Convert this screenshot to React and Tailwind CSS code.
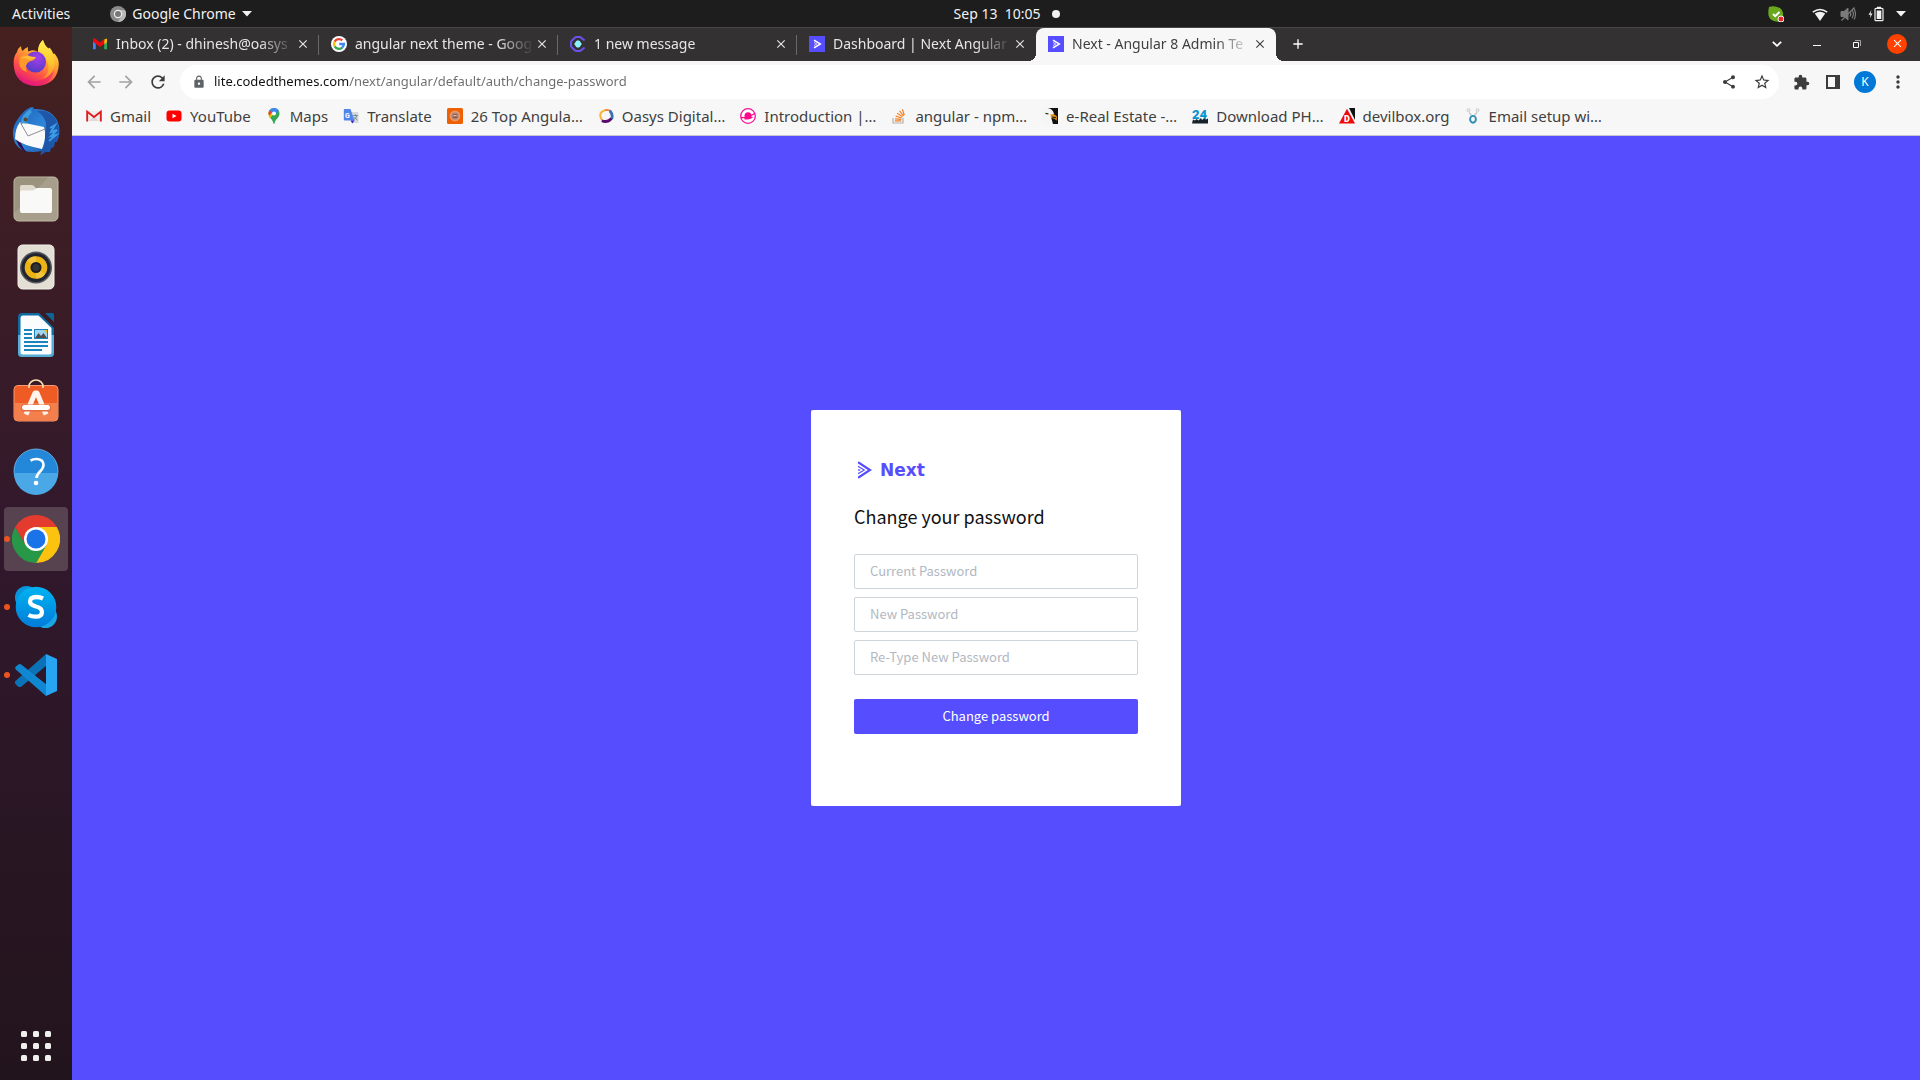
import { useState } from 'react'
import {
  MdArrowBack,
  MdArrowForward,
  MdRefresh,
  MdLock,
  MdShare,
  MdStarBorder,
  MdExtension,
  MdMoreVert,
  MdClose,
  MdAdd,
} from 'react-icons/md'

/* ---------- favicons ---------- */

const GmailIcon = () => (
  <svg viewBox="0 0 16 16" className="size-4">
    <path d="M1 4v9.3h2.8V6.5z" fill="#4285f4" />
    <path d="M15 4v9.3h-2.8V6.5z" fill="#34a853" />
    <path d="M12.2 3.6 15 2.6v3.6l-2.8 2z" fill="#fbbc04" />
    <path d="M1 2.8 3.2 2.6 8 6.4l4.2-3.3v4.6L8 11 3.8 7.7 1 5.8z" fill="#ea0a12" />
  </svg>
)

const GmailOldIcon = () => (
  <svg viewBox="0 0 16 16" className="size-4">
    <path d="M1 3h14v10H1z" fill="#f1eeee" />
    <path d="M3 13 8 8l5 5z" fill="#dcdada" />
    <path d="M1.2 13.4V3.6L8 9l6.8-5.4v9.8" fill="none" stroke="#e01b1b" strokeWidth="1.9" />
  </svg>
)

const GoogleIcon = () => (
  <svg viewBox="0 0 16 16" className="size-4">
    <circle cx="8" cy="8" r="8" fill="#fff" />
    <g fill="none" strokeWidth="2.4">
      <path d="M11.3 4.4A4.9 4.9 0 0 0 3.7 5.6" stroke="#ea4335" />
      <path d="M3.7 5.6a4.9 4.9 0 0 0 0 4.8" stroke="#fbbc05" />
      <path d="M3.7 10.4a4.9 4.9 0 0 0 7.5 1.2" stroke="#34a853" />
      <path d="M11.2 11.6A4.9 4.9 0 0 0 12.9 8H8.2" stroke="#4285f4" />
    </g>
  </svg>
)

const MessageIcon = () => (
  <svg viewBox="0 0 16 16" className="size-4">
    <path d="M14.6 4.6 11.2 1.7Q10.5 1 9.5 1h-3q-1 0-1.7.7L1.7 4.8Q1 5.5 1 6.5v3q0 1 .7 1.7l3.1 3.1q.7.7 1.7.7h3q1 0 1.7-.7l3.4-2.9" fill="none" stroke="#6a52f0" strokeWidth="2" />
    <path d="M8 4.2 9.8 5 11.8 8 9.8 11 8 11.8 6.2 11 4.2 8 6.2 5z" fill="#8df1fb" />
  </svg>
)

const NextFavicon = () => (
  <svg viewBox="0 0 16 16" className="size-4">
    <path d="M0 0h16v16H0z" fill="#564dfe" />
    <path d="M5 4.2 11.3 8 5 11.8" fill="none" stroke="#fff" strokeWidth="1.5" />
    <path d="M5 6.4 7.8 8 5 9.6" fill="none" stroke="#d5d2ff" strokeWidth="1" />
  </svg>
)

const YouTubeIcon = () => (
  <svg viewBox="0 0 16 16" className="size-4">
    <rect x="0.5" y="2.6" width="15" height="11" rx="3" fill="#f00" />
    <path d="M6.5 5.8v4.5L10.5 8z" fill="#fff" />
  </svg>
)

const MapsIcon = () => (
  <svg viewBox="0 0 16 16" className="size-4">
    <path d="M13.5 5.5C13.5 10 9 11 8.6 15.4q-.6.8-1.2 0C7 11 2.5 10 2.5 5.5a5.5 5.5 0 0 1 11 0" fill="#34a853" />
    <path d="M3.8 1.9 8 5.6 3.9 10.2Q2.5 8.2 2.5 5.5q0-2 1.3-3.6" fill="#fbbc04" />
    <path d="M2.5 5.5q0-2 1.3-3.6L6.5 4 3.4 7.8z" fill="#ea4335" />
    <path d="M3.8 1.9A5.5 5.5 0 0 1 12.8 2.8L8.6 7 5.8 5z" fill="#4285f4" />
    <circle cx="8" cy="5.5" r="2" fill="#fff" />
  </svg>
)

const TranslateIcon = () => (
  <svg viewBox="0 0 16 16" className="size-4">
    <path d="M6 4h8.5q1 0 1 1v9q0 1-1 1H9z" fill="#d5d8dc" />
    <path d="M1 1h6.5l4 11.5H1.8q-1 0-1-1V2z" fill="#5086ec" />
    <path d="M7.5 12.5h4L9.3 15.5z" fill="#3b24c6" />
    <text x="2" y="9.5" fontSize="7" fontWeight="700" fill="#fff" fontFamily="Roboto">G</text>
    <path d="M10.2 7.5h4.5M12.3 6.3v1.2M14 7.5q-.6 2.5-3 4M11.5 9q1 2 3 3" stroke="#72808d" strokeWidth="0.9" fill="none" />
  </svg>
)

const TopAngularIcon = () => (
  <svg viewBox="0 0 16 16" className="size-4">
    <rect width="16" height="16" rx="1.5" fill="#ee6002" />
    <circle cx="8" cy="8" r="5.4" fill="#e8976a" />
    <circle cx="8" cy="8" r="3.8" fill="#b98a7c" />
    <path d="M5.8 6h4.4v4.2H5.8z" fill="#8c5748" />
    <path d="M6.3 7.2h3.4v1H6.3z" fill="#f7d9ca" />
  </svg>
)

const OasysIcon = () => (
  <svg viewBox="0 0 16 16" className="size-4" fill="none" strokeWidth="2.8">
    <path d="M4 12.3Q.9 7 3.3 4.3 5.5 2 8.5 2" stroke="#f9b233" strokeWidth="2" />
    <path d="M7.5 2.1q4.5-.6 5.7 1.6" stroke="#e9722d" strokeWidth="1.6" />
    <path d="M11.8 2.8q3.6 4 1.8 8.2" stroke="#3b6fb5" />
    <path d="M13.4 10.5Q9.5 15 3.8 12.8" stroke="#5a0a6e" />
  </svg>
)

const IntroIcon = () => (
  <svg viewBox="0 0 16 16" className="size-4">
    <circle cx="8" cy="8" r="7.3" fill="#fff" stroke="#f3129a" strokeWidth="1.3" />
    <circle cx="8" cy="7.8" r="3.5" fill="#fa0a8b" />
    <path d="M1 9.5q6 1 13.7-4M4.5 10.7q5 .6 8-1.7" stroke="#fa0a8b" strokeWidth="1.4" fill="none" />
  </svg>
)

const StackIcon = () => (
  <svg viewBox="0 0 16 16" className="size-4" fill="none">
    <path d="M2 10v5h10v-5" stroke="#b3b1b0" strokeWidth="1.2" />
    <path d="M3.8 12.8h6.4M4 10.8l6.3.6M4.7 8.2l6.1 1.8M6.2 5.3l5.3 3.4M8.5 2.9l4 4.9M11.4 1.3l1.9 6" stroke="#f48024" strokeWidth="1.2" />
  </svg>
)

const EagleIcon = () => (
  <svg viewBox="0 0 16 16" className="size-4">
    <path d="M0 0h16v16H0z" fill="#111" />
    <path d="M0 0h6q5 1 6 6l-3 3 2 7H0z" fill="#f5f5f3" />
    <path d="M8.5 6.5q4-1 6.5 2l-.4 4.2q-1.6-3-5.6-2.7z" fill="#e8940c" />
    <path d="m3.5 5.4 3 .6M10 9l4 .7" stroke="#222" strokeWidth="1.2" />
  </svg>
)

const Download24Icon = () => (
  <svg viewBox="0 0 16 16" className="size-4">
    <text x="0" y="11" fontSize="13" fontWeight="900" fill="#0e94cf" fontFamily="Roboto">24</text>
    <path d="M0 15.5 1 11.5l2 1 1.5-1.5 2 1.5L9 10l1 2 2-1.5 2 1 2-1v5z" fill="#15222b" />
  </svg>
)

const DevilboxIcon = () => (
  <svg viewBox="0 0 16 16" className="size-4">
    <path d="M10 0h6v12z" fill="#111" />
    <path d="M8 .8 16 15.5H0z" fill="#ee0a0a" />
    <text x="5" y="13.5" fontSize="9" fontWeight="900" fill="#fff" fontFamily="Roboto">D</text>
  </svg>
)

const EmailSetupIcon = () => (
  <svg viewBox="0 0 16 16" className="size-4" fill="none">
    <circle cx="3.5" cy="2.2" r="1.4" stroke="#c3c7c9" />
    <circle cx="12.5" cy="2.2" r="1.4" stroke="#c3c7c9" />
    <path d="m4 4.5 2.5 2.7M12 4.5 9.5 7.2" stroke="#c3c7c9" strokeWidth="1.3" />
    <ellipse cx="8" cy="11.3" rx="2.9" ry="3.4" stroke="#2d8fb5" strokeWidth="1.9" />
  </svg>
)

/* ---------- dock icons ---------- */

const FirefoxIcon = () => (
  <svg viewBox="0 0 48 48" className="size-12">
    <defs>
      <linearGradient id="ffBody" x1="0.8" y1="0.05" x2="0.3" y2="1">
        <stop offset="0" stopColor="#fff44f" />
        <stop offset="0.35" stopColor="#ffa930" />
        <stop offset="0.7" stopColor="#ff4f48" />
        <stop offset="1" stopColor="#e0177f" />
      </linearGradient>
      <linearGradient id="ffFlame" x1="0.5" y1="0" x2="0.5" y2="1">
        <stop offset="0" stopColor="#fff250" />
        <stop offset="0.6" stopColor="#ffc32c" />
        <stop offset="1" stopColor="#ff8a2b" />
      </linearGradient>
      <radialGradient id="ffGlobe" cx="0.6" cy="0.3" r="0.8">
        <stop offset="0" stopColor="#a43fe8" />
        <stop offset="1" stopColor="#4d3bc4" />
      </radialGradient>
    </defs>
    <path d="M5 13q1-4 4-6 0 3 1.5 5Q13 9 16 8q-.5 3 .5 4.5Q22 10 26 13q0-8 5-12 1 5 5.5 8.5l1-1Q40 11 41.5 15l1-.5Q47 20 46.8 25 46 46 24 47 3 46 1.7 26 1 18 5 13" fill="url(#ffBody)" />
    <path d="M26 13q0-8 5-12 1 5 5.5 9 7 7 6 16-2 11-12 14 7-6 6-13-2-10-10.5-14" fill="url(#ffFlame)" />
    <circle cx="23.5" cy="23" r="10.5" fill="url(#ffGlobe)" />
    <path d="M8 18q4-3 8-2 2 2 8 2-1 3-5 4-4 1-5 5-1 3 1 6Q5 30 8 18" fill="#ff9a2a" />
    <path d="M8 19q4-2 8-2 3 1 8 1-2 2-6 3-6-3-10-2" fill="#ffbd3a" />
    <path d="M4 33q8 10 20 9t18-11q-3 15-18 16Q9 46 4 33" fill="#e8167a" opacity="0.5" />
  </svg>
)

const ThunderbirdIcon = () => (
  <svg viewBox="0 0 48 48" className="size-12">
    <defs>
      <linearGradient id="tbBody" x1="0" y1="0" x2="1" y2="1">
        <stop offset="0" stopColor="#1c5fb8" />
        <stop offset="0.5" stopColor="#2f86d8" />
        <stop offset="1" stopColor="#17439a" />
      </linearGradient>
    </defs>
    <path d="M8 9Q15 0 21 0l1 2Q38 1 45 13q5 11 0 22l-2 0-1 5-3 1-1 4-5 0-5 3 2-4Q10 48 3 36-3 22 8 9" fill="url(#tbBody)" />
    <path d="M3 28q2 13 12 18Q7 36 8 29z" fill="#2a0f50" />
    <path d="M25 4q10 6 9 17-1 8-2 18-3 5-3 9 3-3 8-4l6-9q6-12 1-22Q38 2 25 4" fill="#1e56a8" />
    <path d="m38 21 5-3-4 7 6-2-6 6 5-1-7 6" stroke="#3c9ae6" strokeWidth="2" fill="none" />
    <path d="M8 15 32 20q3 10-2 22Q10 38 3 32q0-10 5-17" fill="#fafafa" />
    <path d="m8 15 8 14 17-7" stroke="#8d8d93" strokeWidth="1" fill="none" />
    <path d="M9 18Q8 8 20 1q-2 3 0 4-5 5-6 12-3-2-5 1" fill="#3e9ddf" />
    <circle cx="13.5" cy="12.5" r="2" fill="#5a4a31" />
  </svg>
)

const FilesIcon = () => (
  <svg viewBox="0 0 48 48" className="size-12">
    <rect x="2" y="2" width="44" height="44" rx="4.5" fill="#a79e8b" stroke="#c2bba9" />
    <path d="M6 2.5h30L2.5 38V6.5Q3 3 6 2.5" fill="#958c78" opacity="0.6" />
    <path d="M8 12q0-2 2-2h10q1.5 0 2.5 1.5L24 13.5 20 20H8z" fill="#dfdacd" />
    <path d="M8 17q0-1.5 2-1.5h10.5q1.5 0 2.5-1.5 1-1 2.5-1H38q2 0 2 2v21q0 2-2 2H10q-2 0-2-2z" fill="#f9f9f8" />
  </svg>
)

const RhythmboxIcon = () => (
  <svg viewBox="0 0 48 48" className="size-12">
    <rect x="6" y="2" width="36" height="44" rx="4.5" fill="#e3dfd4" stroke="#f3f0e8" />
    <circle cx="24" cy="24.5" r="16" fill="#55585f" />
    <circle cx="24" cy="24.5" r="14.5" fill="#22242e" />
    <circle cx="24" cy="24.5" r="11.3" fill="#ebb414" />
    <path d="M24 24.5 15 17.5A11.3 11.3 0 0 1 24 13.2zM24 24.5l9 7a11.3 11.3 0 0 1-9 4.3z" fill="#f6cf58" opacity="0.6" />
    <circle cx="24" cy="24.5" r="5.5" fill="#1d1d1d" />
    <circle cx="24" cy="24.5" r="3.6" fill="#343434" />
  </svg>
)

const WriterIcon = () => (
  <svg viewBox="0 0 48 48" className="size-12">
    <path d="M10 2h17l15 15v25q0 4-4 4H10q-4 0-4-4V6q0-4 4-4" fill="#0f6aa0" />
    <path d="M6 24h36v18q0 4-4 4H10q-4 0-4-4z" fill="#57add5" />
    <path d="M33 2h7q2 0 2 2v7z" fill="#0d6698" />
    <path d="M11 4.5h15.5L39.5 17v24q0 2.5-2.5 2.5H11q-2.5 0-2.5-2.5V7q0-2.5 2.5-2.5" fill="#fafcfd" />
    <path d="M12 19h8M12 23h8M12 27h8M12 31h24M12 35h24M12 39h18" stroke="#1c84bd" strokeWidth="1.9" />
    <path d="M22 18h14v10H22z" fill="#1c84bd" />
    <path d="M23 19h12v8H23z" fill="#9fd6f3" />
    <path d="m23 27 3.5-5 2.5 3 2.5-3 3.5 5z" fill="#4e4e4e" />
    <path d="M32 19h3v3.5z" fill="#f3bd17" />
  </svg>
)

const SoftwareIcon = () => (
  <svg viewBox="0 3 48 48" className="size-12">
    <rect x="2" y="9.5" width="44" height="35.5" rx="4" fill="#ef5b25" stroke="#f79a72" />
    <path d="M2.5 27h43v14q0 3.5-3.5 3.5H6q-3.5 0-3.5-3.5z" fill="#f37f4d" />
    <path d="M17 12v-1.5a7 6.5 0 0 1 14 0V12" fill="none" stroke="#fae1b4" strokeWidth="1.6" />
    <path d="M14 38.5 23 17h2l9 21.5" fill="none" stroke="#fff3ec" strokeWidth="5" strokeLinejoin="round" />
    <path d="M12.5 32h23" stroke="#e36a3b" strokeWidth="7" strokeLinecap="round" />
    <path d="M12.5 31.5h23" stroke="#fff" strokeWidth="5" strokeLinecap="round" />
  </svg>
)

const HelpIcon = () => (
  <svg viewBox="0 0 48 48" className="size-12">
    <circle cx="24" cy="24" r="22" fill="#2388d9" stroke="#74bcee" strokeWidth="0.8" />
    <path d="M2 26h44a22 22 0 0 1-44 0" fill="#4aa8e6" />
    <path d="M18.5 13.5q3-1.7 6.5-1.5 6.5.5 6.5 6 0 3-3.5 6.5T24.5 31" fill="none" stroke="#fff" strokeWidth="2.6" />
    <circle cx="24" cy="36" r="2.3" fill="#fff" />
  </svg>
)

const ChromeIcon = () => (
  <svg viewBox="0 0 48 48" className="size-12">
    <path d="M24 24 3.2 12a24 24 0 0 1 41.6 0z" fill="#e33b2e" />
    <path d="M24 12h20.8A24 24 0 0 1 24 48l10.4-18z" fill="#fcc210" />
    <path d="M3.2 12A24 24 0 0 0 24 48l10.4-18L24 34l-10.4-4z" fill="#279847" />
    <path d="M3.2 12 13.6 30 24 24V12z" fill="#e33b2e" />
    <circle cx="24" cy="24" r="12" fill="#fff" />
    <circle cx="24" cy="24" r="9.5" fill="#1a73e8" />
  </svg>
)

const SkypeIcon = () => (
  <svg viewBox="0 0 48 48" className="size-12">
    <defs>
      <linearGradient id="skBody" x1="0" y1="0" x2="0" y2="1">
        <stop offset="0" stopColor="#00b4f2" />
        <stop offset="1" stopColor="#007bd9" />
      </linearGradient>
    </defs>
    <circle cx="14.5" cy="14.5" r="11.5" fill="#0795dc" />
    <circle cx="33.5" cy="33.5" r="11.5" fill="#1aa5e6" />
    <circle cx="24" cy="24" r="20.3" fill="url(#skBody)" />
    <path d="M31 15.5Q28 14 24.5 14 18 14 18 18.5q0 3.3 6 5 6 1.5 6 5.5 0 4.7-6.5 4.7-4 0-7-1.7" fill="none" stroke="#fff" strokeWidth="4.3" />
  </svg>
)

const VsCodeIcon = () => (
  <svg viewBox="0 0 48 48" className="size-12">
    <path d="M34 3 4 29.5q-2 1.5-.5 3.5l2.5 2.5q1.5 1.2 3.5 0L35 14z" fill="#0b72b8" />
    <path d="M34 45 3.8 18.5q-1.5-1.5 0-3L6.5 13.5q1.5-1 3 .3L35 34z" fill="#1088d1" />
    <path d="M34 3 45 8v32l-11 5z" fill="#27a5f2" />
  </svg>
)

const AppsGridIcon = () => (
  <svg viewBox="0 0 30 30" className="size-[30px]" fill="#efefee">
    {[0, 12, 24].map((y) =>
      [0, 12, 24].map((x) => <rect key={`${x}-${y}`} x={x} y={y} width="6" height="6" rx="1.5" />)
    )}
  </svg>
)

/* ---------- data ---------- */

const DOCK_APPS = [
  { name: 'Firefox', Icon: FirefoxIcon },
  { name: 'Thunderbird', Icon: ThunderbirdIcon },
  { name: 'Files', Icon: FilesIcon },
  { name: 'Rhythmbox', Icon: RhythmboxIcon },
  { name: 'LibreOffice Writer', Icon: WriterIcon },
  { name: 'Ubuntu Software', Icon: SoftwareIcon },
  { name: 'Help', Icon: HelpIcon },
  { name: 'Google Chrome', Icon: ChromeIcon, running: true, active: true },
  { name: 'Skype', Icon: SkypeIcon, running: true },
  { name: 'Visual Studio Code', Icon: VsCodeIcon, running: true },
]

const TABS = [
  { title: 'Inbox (2) - dhinesh@oasys', Icon: GmailIcon },
  { title: 'angular next theme - Goog', Icon: GoogleIcon },
  { title: '1 new message', Icon: MessageIcon },
  { title: 'Dashboard | Next Angular', Icon: NextFavicon },
  { title: 'Next - Angular 8 Admin Te', Icon: NextFavicon },
]

const BOOKMARKS = [
  { label: 'Gmail', Icon: GmailOldIcon },
  { label: 'YouTube', Icon: YouTubeIcon },
  { label: 'Maps', Icon: MapsIcon },
  { label: 'Translate', Icon: TranslateIcon },
  { label: '26 Top Angula…', Icon: TopAngularIcon },
  { label: 'Oasys Digital…', Icon: OasysIcon },
  { label: 'Introduction |…', Icon: IntroIcon },
  { label: 'angular - npm…', Icon: StackIcon },
  { label: 'e-Real Estate -…', Icon: EagleIcon },
  { label: 'Download PH…', Icon: Download24Icon },
  { label: 'devilbox.org', Icon: DevilboxIcon },
  { label: 'Email setup wi…', Icon: EmailSetupIcon },
]

const FIELDS = [
  { id: 'current', label: 'Current Password' },
  { id: 'next', label: 'New Password' },
  { id: 'retype', label: 'Re-Type New Password' },
]

/* ---------- desktop ---------- */

function TopBar() {
  return (
    <header className="flex h-[27px] shrink-0 items-center bg-[#1d1d1d] text-sm leading-5 text-[#f2f2f2]">
      <div className="flex grow basis-[88px] items-center">
        <button type="button" className="ml-3">Activities</button>
        <button type="button" className="ml-10 flex items-center gap-1.5">
          <svg viewBox="0 0 16 16" className="size-4">
            <circle cx="8" cy="8" r="8" fill="#8a8a8a" />
            <path d="M8 4h7A8 8 0 0 1 8 16l3.5-6z" fill="#b9b9b9" />
            <circle cx="8" cy="8" r="4.2" fill="#efefef" />
            <circle cx="8" cy="8" r="3" fill="#777" />
          </svg>
          Google Chrome
          <svg viewBox="0 0 10 6" className="w-2.5" fill="#f2f2f2">
            <path d="M0 0h10L5 5.5z" />
          </svg>
        </button>
      </div>
      <button type="button" className="flex items-center gap-3 pl-5">
        <span className="whitespace-pre">Sep 13  10:05</span>
        <span className="size-2 rounded-full bg-[#f2f2f2]"></span>
      </button>
      <div className="flex grow basis-0 items-center justify-end pr-3.5">
        <svg viewBox="0 0 16 16" className="mr-7 size-4">
          <path d="M1 1q4-1.5 8 0 5 1 6 6 .5 4-1 8-4 1.5-8 0-4-1-5.5-5.5Q0 5 1 1" fill="#69a81c" />
          <path d="m5 8 2.2 2.2L11.5 6" stroke="#fff" strokeWidth="2" fill="none" />
          <circle cx="13" cy="13" r="3" fill="#e6262b" stroke="#fff" />
        </svg>
        <button type="button" className="flex items-center" aria-label="System menu">
          <svg viewBox="0 0 16 16" className="mr-3 size-4">
            <path d="M8 15 2.8 7.5Q8 4 13.2 7.5z" fill="#f2f2f2" />
            <path d="M.8 6.2Q8 .8 15.2 6.2" fill="none" stroke="#f2f2f2" strokeWidth="1.5" />
          </svg>
          <svg viewBox="0 0 16 16" className="mr-3 size-4" fill="none" stroke="#7b7b7b">
            <path d="M1 5.5h3L8 2v12l-4-3.5H1z" fill="#7b7b7b" />
            <path d="M10 5.5q1.5 2.5 0 5M12 3.8q2.7 4.2 0 8.4M14 2.5q3 5.5 0 11M1.5 14.5l13-13" strokeWidth="1.2" />
          </svg>
          <svg viewBox="0 0 16 16" className="mr-3 size-4">
            <path d="M3.5 4 .5 8.8h2L2 12l2.5-4.5h-2z" fill="#f2f2f2" />
            <rect x="7" y="2.3" width="8" height="12.4" rx="1" fill="none" stroke="#f2f2f2" strokeWidth="1.2" />
            <path d="M9 .8h4v1.5H9zM8.7 4.5h4.6V13H8.7z" fill="#f2f2f2" />
          </svg>
          <svg viewBox="0 0 10 6" className="w-2.5" fill="#f2f2f2">
            <path d="M0 0h10L5 5.5z" />
          </svg>
        </button>
      </div>
    </header>
  )
}

function Dock() {
  return (
    <nav className="flex w-[72px] shrink-0 flex-col items-center gap-1 bg-linear-to-b from-[#45201f] via-[#31182c] to-[#22141c] pt-1 pb-0.5">
      {DOCK_APPS.map(({ name, Icon, running, active }) => (
        <button
          key={name}
          type="button"
          aria-label={name}
          className={`relative flex size-16 items-center justify-center rounded ${active ? 'bg-[#57424f]' : ''}`}
        >
          {running && <span className="absolute top-[29px] left-0 size-1.5 rounded-full bg-[#e95420]"></span>}
          <Icon />
        </button>
      ))}
      <button type="button" aria-label="Show Applications" className="mt-auto flex size-16 items-center justify-center">
        <AppsGridIcon />
      </button>
    </nav>
  )
}

/* ---------- browser ---------- */

function TabStrip() {
  return (
    <div className="flex h-[34px] items-stretch border-t border-[#474546] bg-[#333132] pl-2">
      {TABS.map(({ title, Icon }, idx) => {
        const active = idx === TABS.length - 1
        return (
          <div
            key={title}
            className={`relative flex items-center pr-2 pb-0.5 pl-3 ${
              active ? 'w-60 rounded-t-lg bg-[#f7f7f7] text-[#3f3f3f]' : 'w-[239px] text-[#e6e6e6]'
            }`}
          >
            {active && (
              <>
                <span className="absolute bottom-0 -left-2 size-2 bg-[radial-gradient(circle_at_0_0,transparent_8px,#f7f7f7_8px)]"></span>
                <span className="absolute -right-2 bottom-0 size-2 bg-[radial-gradient(circle_at_100%_0,transparent_8px,#f7f7f7_8px)]"></span>
              </>
            )}
            <button type="button" className="flex min-w-0 flex-1 items-center gap-2 text-left">
              <span className="shrink-0"><Icon /></span>
              <span className="flex-1 overflow-hidden text-sm whitespace-nowrap mask-r-from-80%">{title}</span>
            </button>
            <button type="button" aria-label="Close tab" className="flex size-4 items-center justify-center">
              <MdClose size={14} />
            </button>
            {idx < 3 && <span className="absolute top-[7px] right-0 h-5 w-px bg-[#6a6869]"></span>}
          </div>
        )
      })}
      <button type="button" aria-label="New tab" className="ml-3.5 flex w-4 items-center justify-center pb-0.5 text-white">
        <MdAdd size={18} />
      </button>
      <div className="ml-auto flex items-center pr-[13px] pb-0.5 text-white">
        <button type="button" aria-label="Search tabs" className="flex w-10 justify-center">
          <svg viewBox="0 0 10 6" className="w-2.5" fill="none" stroke="#fff" strokeWidth="1.8">
            <path d="m.8.8 4.2 4 4.2-4" />
          </svg>
        </button>
        <button type="button" aria-label="Minimize" className="flex w-10 justify-center pt-1">
          <span className="h-px w-2 bg-white"></span>
        </button>
        <button type="button" aria-label="Restore" className="flex w-10 justify-center">
          <svg viewBox="0 0 8 8" className="size-2" fill="none">
            <path d="M2 .5h5.5V6" stroke="#a5a4a4" />
            <path d="M.5 2.5h5v5h-5z" stroke="#fff" />
          </svg>
        </button>
        <button type="button" aria-label="Close" className="ml-2.5 flex size-5 items-center justify-center rounded-full bg-[#ff4200]">
          <MdClose size={13} />
        </button>
      </div>
    </div>
  )
}

function Toolbar() {
  const [url, setUrl] = useState('lite.codedthemes.com/next/angular/default/auth/change-password')

  return (
    <div className="flex items-center bg-[#f7f7f7] px-3 pt-1 text-[#3c3c3c]">
      <button type="button" aria-label="Back" className="mr-3 text-[#a3a3a3]"><MdArrowBack size={20} /></button>
      <button type="button" aria-label="Forward" className="mr-3 text-[#a3a3a3]"><MdArrowForward size={20} /></button>
      <button type="button" aria-label="Reload" className="mr-3"><MdRefresh size={20} /></button>
      <div className="flex h-[34px] flex-1 items-center rounded-full bg-white pr-2 pl-3">
        <MdLock size={14} className="mr-2 text-[#5f6368]" />
        <input
          type="text"
          aria-label="Address"
          value={url}
          onChange={(e) => setUrl(e.target.value)}
          className="min-w-0 flex-1 bg-[linear-gradient(90deg,#111_135px,#6b6b6b_135px)] bg-clip-text text-[13px] text-transparent outline-none"
        />
        <button type="button" aria-label="Share" className="mr-4"><MdShare size={16} /></button>
        <button type="button" aria-label="Bookmark"><MdStarBorder size={18} /></button>
      </div>
      <button type="button" aria-label="Extensions" className="ml-3.5"><MdExtension size={17} /></button>
      <button type="button" aria-label="Side panel" className="ml-4 flex">
        <svg viewBox="0 0 14 14" className="size-3.5" fill="#3c3c3c">
          <path d="M0 0h14v14H0zM2 2v10h7V2z" fillRule="evenodd" />
        </svg>
      </button>
      <button type="button" aria-label="Profile" className="ml-3.5 size-[22px] rounded-full bg-[#0078d7] text-xs text-white">K</button>
      <button type="button" aria-label="Menu" className="ml-3"><MdMoreVert size={20} /></button>
    </div>
  )
}

function BookmarksBar() {
  return (
    <div className="flex h-[37px] items-center gap-[15px] border-b border-[#c6c4d0] bg-[#f7f7f7] pb-0.5 pl-3.5 text-[15px] text-[#3f3f3f]">
      {BOOKMARKS.map(({ label, Icon }) => (
        <a key={label} href="#" className="flex items-center gap-2 whitespace-nowrap">
          <Icon />
          {label}
        </a>
      ))}
    </div>
  )
}

/* ---------- page ---------- */

function ChangePasswordPage() {
  const [values, setValues] = useState({ current: '', next: '', retype: '' })

  const onSubmit = (e) => e.preventDefault()

  return (
    <main className="flex flex-1 items-center justify-center bg-[#564dfe] font-['Noto_Sans_CJK_SC',sans-serif]">
      <form onSubmit={onSubmit} className="w-[370px] rounded-xs bg-white px-[43px] pt-12 pb-[72px]">
        <div className="flex h-6 items-center gap-2 pl-1 text-[#564dfe]">
          <svg viewBox="0 0 14 18" className="h-[18px] w-3.5" fill="none" stroke="#564dfe">
            <path d="M0 1.3 12 9 0 16.7" strokeWidth="2.2" />
            <path d="M0 5.3 6.3 9 0 12.7" strokeWidth="1.1" />
            <path d="M0 8.5h2v1H0z" strokeWidth="0.6" />
          </svg>
          <span className="font-['DejaVu_Sans',sans-serif] text-[17px] leading-6 font-bold">Next</span>
        </div>
        <h1 className="mt-5 text-lg leading-7 text-[#111]">Change your password</h1>
        <div className="mt-6 flex flex-col gap-2">
          {FIELDS.map(({ id, label }) => (
            <input
              key={id}
              type="password"
              aria-label={label}
              placeholder={label}
              value={values[id]}
              onChange={(e) => setValues({ ...values, [id]: e.target.value })}
              className="h-[35px] w-full rounded-xs border border-[#cdd4dc] px-[15px] pb-0.5 text-[13px] placeholder:text-[#b1b8c2]"
            />
          ))}
        </div>
        <button type="submit" className="mt-6 h-[35px] w-full rounded-xs bg-[#564dfe] pb-0.5 text-[13px] text-white">
          Change password
        </button>
      </form>
    </main>
  )
}

export default function App() {
  return (
    <div className="flex min-h-screen flex-col font-['Noto_Sans',sans-serif]">
      <TopBar />
      <div className="flex flex-1">
        <Dock />
        <div className="flex min-w-0 flex-1 flex-col">
          <TabStrip />
          <Toolbar />
          <BookmarksBar />
          <ChangePasswordPage />
        </div>
      </div>
    </div>
  )
}
